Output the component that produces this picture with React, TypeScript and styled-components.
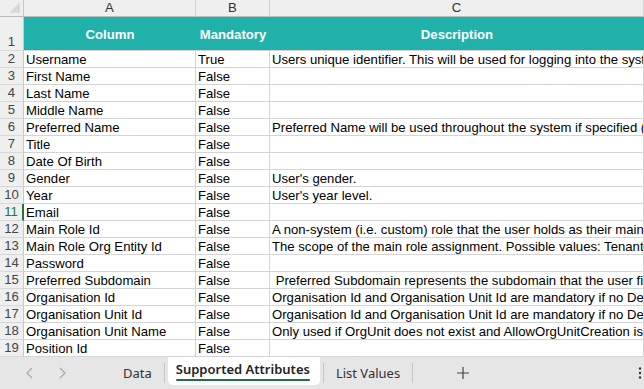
import React, { FC } from 'react';
import styled, { createGlobalStyle } from 'styled-components';

interface IRow {
  column: string;
  mandatory: string;
  description: string;
}

const rows: IRow[] = [
  { column: 'Username', mandatory: 'True', description: 'Users unique identifier. This will be used for logging into the system.' },
  { column: 'First Name', mandatory: 'False', description: '' },
  { column: 'Last Name', mandatory: 'False', description: '' },
  { column: 'Middle Name', mandatory: 'False', description: '' },
  { column: 'Preferred Name', mandatory: 'False', description: 'Preferred Name will be used throughout the system if specified (By default First Name is used).' },
  { column: 'Title', mandatory: 'False', description: '' },
  { column: 'Date Of Birth', mandatory: 'False', description: '' },
  { column: 'Gender', mandatory: 'False', description: "User's gender." },
  { column: 'Year', mandatory: 'False', description: "User's year level." },
  { column: 'Email', mandatory: 'False', description: '' },
  { column: 'Main Role Id', mandatory: 'False', description: 'A non-system (i.e. custom) role that the user holds as their main role.' },
  { column: 'Main Role Org Entity Id', mandatory: 'False', description: 'The scope of the main role assignment. Possible values: Tenant, Organisation, Unit.' },
  { column: 'Password', mandatory: 'False', description: '' },
  { column: 'Preferred Subdomain', mandatory: 'False', description: ' Preferred Subdomain represents the subdomain that the user first logs in to.' },
  { column: 'Organisation Id', mandatory: 'False', description: 'Organisation Id and Organisation Unit Id are mandatory if no Default is set.' },
  { column: 'Organisation Unit Id', mandatory: 'False', description: 'Organisation Id and Organisation Unit Id are mandatory if no Default is set.' },
  { column: 'Organisation Unit Name', mandatory: 'False', description: 'Only used if OrgUnit does not exist and AllowOrgUnitCreation is true.' },
  { column: 'Position Id', mandatory: 'False', description: '' },
];

const App: FC = () => {
  return (
    <>
      <GlobalStyle />
      <Window>
        <Sheet>
          <Corner>
            <CornerMark />
          </Corner>
          <ColHead>A</ColHead>
          <ColHead>B</ColHead>
          <ColHead>C</ColHead>

          <RowNum $tall>1</RowNum>
          <TitleCell>Column</TitleCell>
          <TitleCell>Mandatory</TitleCell>
          <TitleCell>Description</TitleCell>

          {rows.map((row, i) => (
            <React.Fragment key={row.column}>
              <RowNum $active={i + 2 === 11}>{i + 2}</RowNum>
              <Cell>{row.column}</Cell>
              <Cell>{row.mandatory}</Cell>
              <Cell>{row.description}</Cell>
            </React.Fragment>
          ))}
        </Sheet>

        <TabBar>
          <Nav>
            <NavArrow>
              <svg width="10" height="12" viewBox="0 0 10 12">
                <path d="M7 1 L2 6 L7 11" fill="none" stroke="#a6a6a6" strokeWidth="1.2" />
              </svg>
            </NavArrow>
            <NavArrow>
              <svg width="10" height="12" viewBox="0 0 10 12">
                <path d="M3 1 L8 6 L3 11" fill="none" stroke="#a6a6a6" strokeWidth="1.2" />
              </svg>
            </NavArrow>
          </Nav>
          <Tab>Data</Tab>
          <Sep />
          <Tab $active>Supported Attributes</Tab>
          <Sep />
          <Tab>List Values</Tab>
          <Sep />
          <AddTab>
            <svg width="14" height="14" viewBox="0 0 14 14">
              <path d="M7 1 V13 M1 7 H13" stroke="#444" strokeWidth="1.2" />
            </svg>
          </AddTab>
          <More>
            <svg width="4" height="14" viewBox="0 0 4 14">
              <circle cx="2" cy="2.5" r="1.2" fill="#333" />
              <circle cx="2" cy="7" r="1.2" fill="#333" />
              <circle cx="2" cy="11.5" r="1.2" fill="#333" />
            </svg>
          </More>
        </TabBar>
      </Window>
    </>
  );
};

export default App;

const GlobalStyle = createGlobalStyle`
  html, body {
    margin: 0;
    padding: 0;
    background: #ffffff;
    font-family: 'Liberation Sans', Arial, sans-serif;
  }
  * {
    box-sizing: border-box;
  }
`;

const Window = styled.div`
  width: 644px;
  height: 389px;
  display: flex;
  flex-direction: column;
  overflow: hidden;
`;

const Sheet = styled.div`
  display: grid;
  grid-template-columns: 24px 172px 74px 374px;
  grid-template-rows: 17px 34px repeat(18, 17px);
  font-size: 13.15px;
  color: #000;
`;

const Corner = styled.div`
  background: #efefef;
  border-right: 1px solid #c8c8c8;
  border-bottom: 1px solid #bdbdbd;
  position: relative;
`;

const CornerMark = styled.div`
  position: absolute;
  right: 3px;
  bottom: 3px;
  width: 0;
  height: 0;
  border-left: 11px solid transparent;
  border-bottom: 11px solid #dadada;
`;

const ColHead = styled.div`
  background: #efefef;
  border-right: 1px solid #d4d4d4;
  border-bottom: 1px solid #bdbdbd;
  color: #333;
  display: flex;
  align-items: center;
  justify-content: center;
  line-height: 16px;
`;

const RowNum = styled.div<{ $tall?: boolean; $active?: boolean }>`
  background: #efefef;
  border-right: ${p => (p.$active ? '2px solid #217346' : '1px solid #c8c8c8')};
  border-bottom: 1px solid #d8d8d8;
  color: ${p => (p.$active ? '#217346' : '#444')};
  display: flex;
  align-items: flex-end;
  justify-content: center;
  line-height: 16px;
`;

const TitleCell = styled.div`
  background: #20b2aa;
  border-bottom: 1px solid #d4d4d4;
  color: #ffffff;
  font-weight: bold;
  display: flex;
  align-items: center;
  justify-content: center;
  padding-top: 1px;
`;

const Cell = styled.div`
  border-right: 1px solid #d4d4d4;
  border-bottom: 1px solid #d4d4d4;
  padding: 0 2px;
  line-height: 15px;
  white-space: pre;
  overflow: hidden;
  display: flex;
  align-items: flex-end;
`;

const TabBar = styled.div`
  flex: 1;
  background: #e6e6e6;
  display: flex;
  align-items: stretch;
  font-family: 'Noto Sans', 'Open Sans', sans-serif;
  font-size: 13px;
  color: #333;
`;

const Nav = styled.div`
  width: 111px;
  display: flex;
  align-items: center;
  padding-left: 25px;
  gap: 22px;
`;

const NavArrow = styled.div`
  display: flex;
  align-items: center;
`;

const Tab = styled.div<{ $active?: boolean }>`
  display: flex;
  align-items: center;
  height: ${p => (p.$active ? '28px' : '32px')};
  padding: ${p => (p.$active ? '0 10px 4px 8px' : '0 12px')};
  margin: ${p => (p.$active ? '0 3px' : '0')};
  background: ${p => (p.$active ? '#ffffff' : 'transparent')};
  border-radius: 0 0 5px 5px;
  font-weight: ${p => (p.$active ? 600 : 400)};
  color: ${p => (p.$active ? '#222' : '#333')};
  position: relative;

  &::after {
    content: '';
    display: ${p => (p.$active ? 'block' : 'none')};
    position: absolute;
    left: 8px;
    right: 10px;
    bottom: 4px;
    height: 2px;
    background: #1e7145;
    border-radius: 1px;
  }
`;

const Sep = styled.div`
  width: 1px;
  height: 20px;
  margin-top: 6px;
  background: #c6c6c6;
`;

const AddTab = styled.div`
  display: flex;
  align-items: center;
  padding-left: 43px;
`;

const More = styled.div`
  margin-left: auto;
  display: flex;
  align-items: center;
  padding-right: 2px;
  width: 6px;
`;
